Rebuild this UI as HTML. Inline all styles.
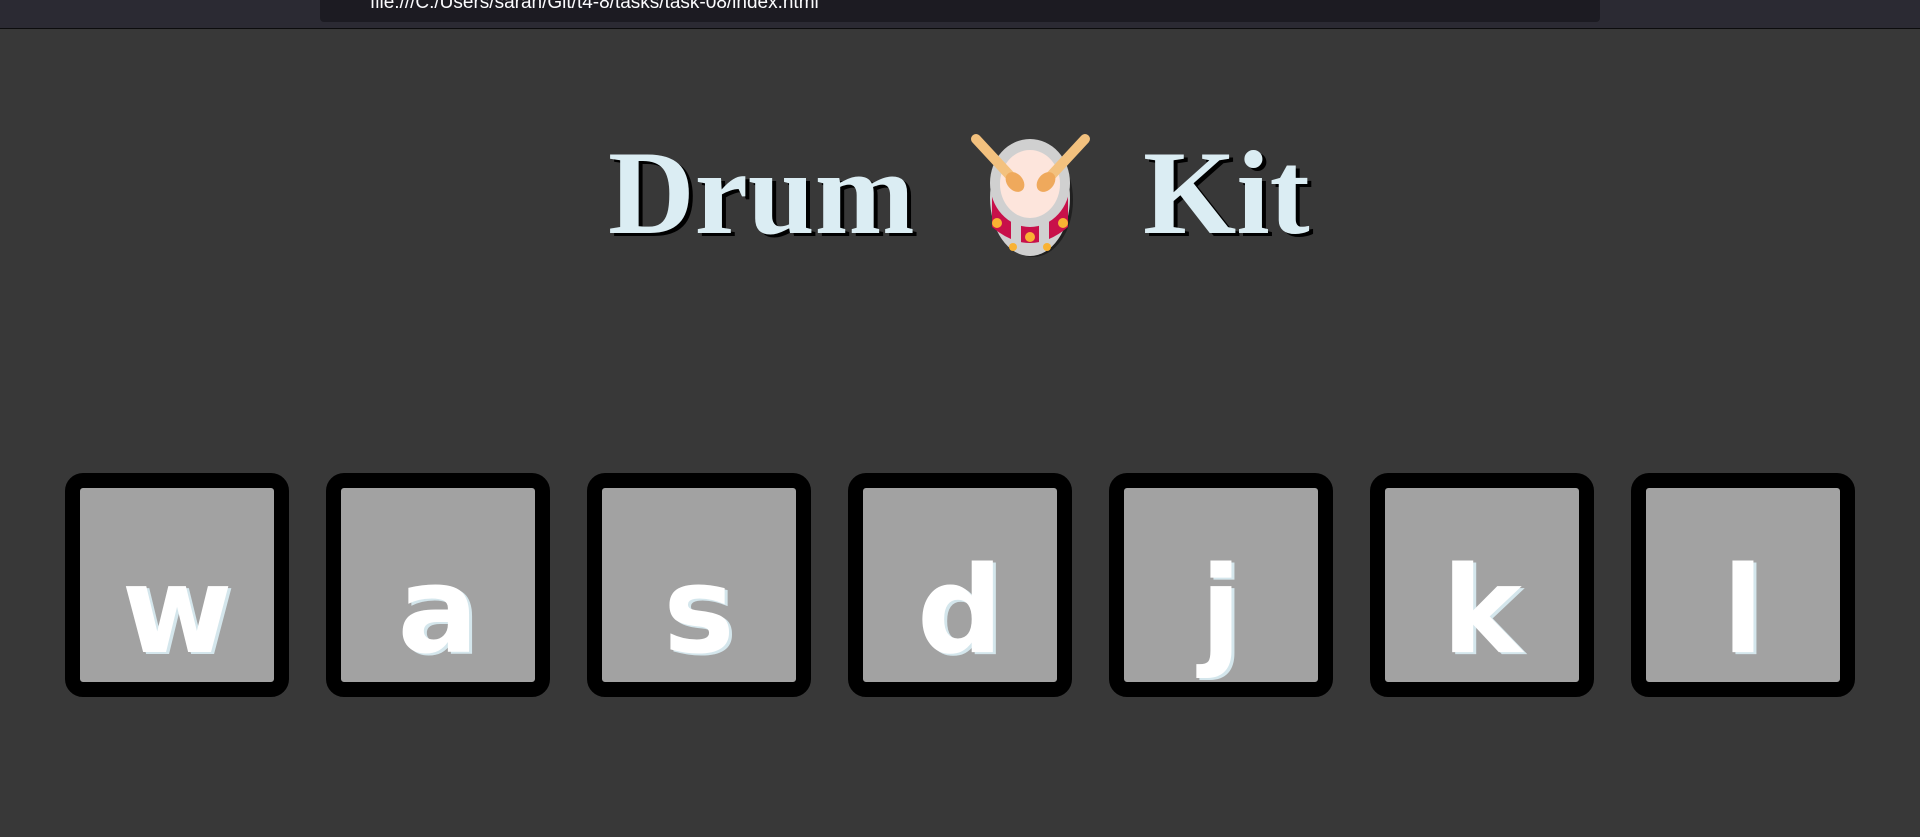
<!DOCTYPE html>
<html><head><style>
html,body{margin:0;padding:0;width:1920px;height:837px;overflow:hidden;background:#383838}
.bar{position:absolute;left:0;top:0;width:1920px;height:28px;background:#2b2a33;border-bottom:1px solid #0c0c0d}
.addr{position:absolute;left:320px;top:-12px;width:1280px;height:34px;background:#1c1b22;border-radius:4px;color:#fbfbfe;font:19px "Liberation Sans",sans-serif}
.addr span{position:absolute;left:50px;top:4px}
.t{position:absolute;top:133px;font:bold 120px "Liberation Serif",serif;color:#dbedf3;text-shadow:4px 3px 0 #000;line-height:120px;white-space:nowrap}
.drum{position:absolute;left:967px;top:131px;width:127px;height:126px}
.key{position:absolute;top:473px;width:194px;height:194px;border:15px solid #000;border-radius:18px;background:#a2a2a2}
.key span{position:absolute;left:0;width:100%;top:64px;text-align:center;font:bold 120px "DejaVu Sans",sans-serif;color:#fff;text-shadow:3px 2px 0 #d4e6ec;line-height:120px}
</style></head><body>
<div class="bar"><div class="addr"><span>file:///C:/Users/sarah/Git/t4-8/tasks/task-08/index.html</span></div></div>
<div class="t" style="left:608px">Drum</div>
<div class="t" style="left:1143px">Kit</div>
<svg class="drum" viewBox="0 0 127 126">
<ellipse cx="66" cy="69" rx="40" ry="57" fill="#111" opacity=".6"/>
<ellipse cx="63" cy="67" rx="40" ry="58" fill="#d0d0d0"/>
<path d="M25 58 L25 96 Q63 128 101 96 L101 58 Z" fill="#c8104a"/>
<rect x="44" y="72" width="10" height="46" fill="#d0d0d0"/>
<rect x="72" y="72" width="10" height="46" fill="#d0d0d0"/>
<circle cx="30" cy="92" r="5" fill="#f9b233"/><circle cx="63" cy="106" r="5" fill="#f9b233"/><circle cx="96" cy="92" r="5" fill="#f9b233"/>
<circle cx="46" cy="116" r="4" fill="#f9b233"/><circle cx="80" cy="116" r="4" fill="#f9b233"/>
<ellipse cx="63" cy="52" rx="40" ry="44" fill="#d0d0d0"/>
<ellipse cx="63" cy="53" rx="30" ry="34" fill="#fde5dc"/>
<line x1="9" y1="8" x2="47" y2="49" stroke="#f3c17e" stroke-width="10" stroke-linecap="round"/>
<line x1="118" y1="8" x2="80" y2="49" stroke="#f3c17e" stroke-width="10" stroke-linecap="round"/>
<ellipse cx="48" cy="51" rx="8" ry="11" fill="#efa95c" transform="rotate(-40 48 51)"/>
<ellipse cx="79" cy="51" rx="8" ry="11" fill="#efa95c" transform="rotate(40 79 51)"/>
</svg>
<div class="key" style="left:65px"><span>w</span></div>
<div class="key" style="left:326px"><span>a</span></div>
<div class="key" style="left:587px"><span>s</span></div>
<div class="key" style="left:848px"><span>d</span></div>
<div class="key" style="left:1109px"><span>j</span></div>
<div class="key" style="left:1370px"><span>k</span></div>
<div class="key" style="left:1631px"><span>l</span></div>
</body></html>
